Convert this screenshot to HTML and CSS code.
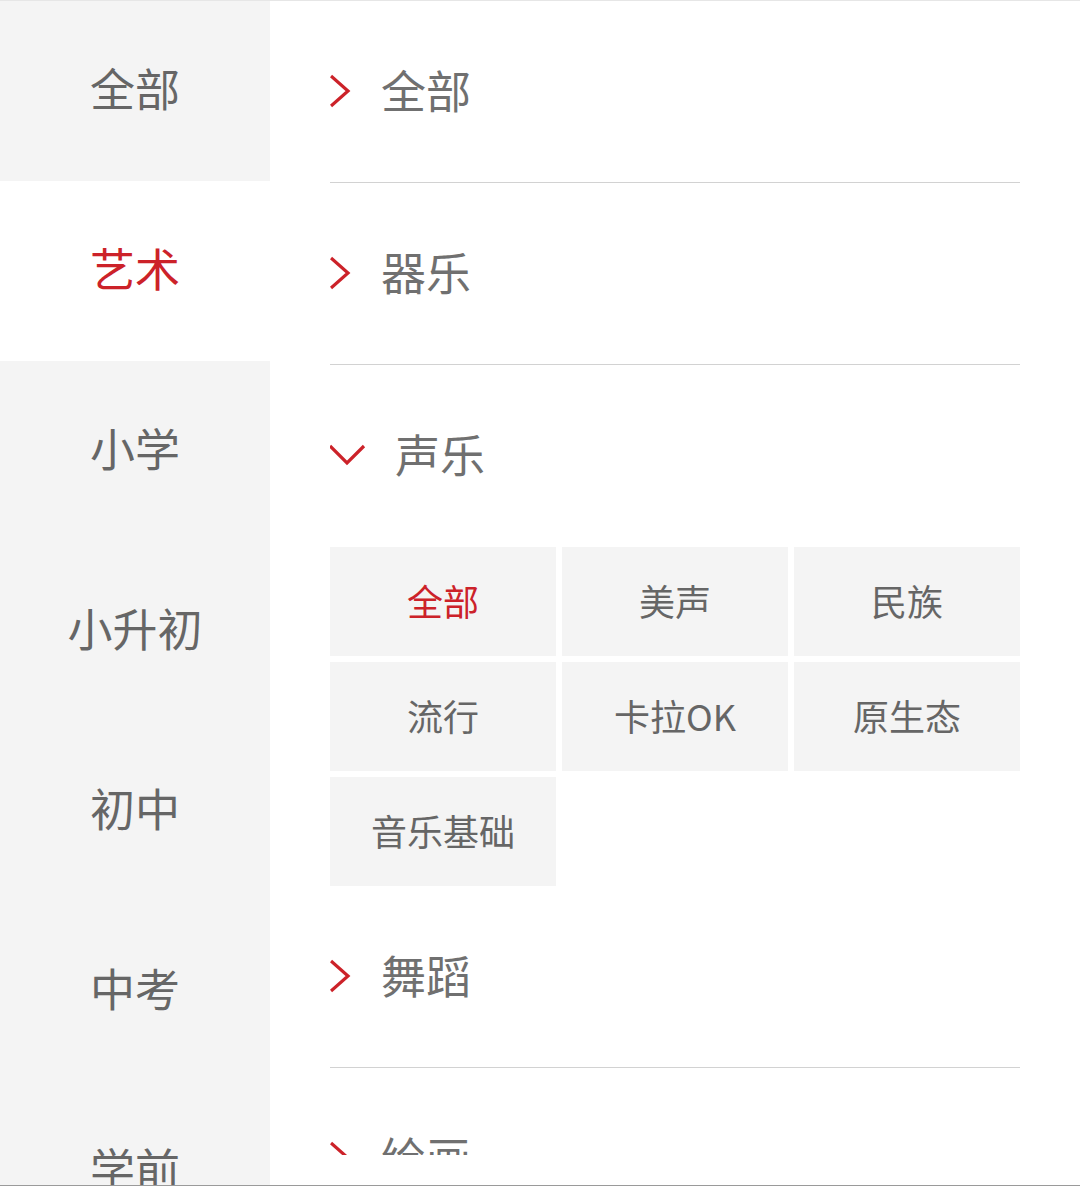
FILE: index.html
```html
<!DOCTYPE html>
<html lang="zh">
<head>
<meta charset="utf-8">
<link rel="stylesheet" href="styles.css">
</head>
<body>
<div class="page">
  <div class="topline"></div>
  <div class="main">
    <nav class="sidebar">
      <div class="side-item">全部</div>
      <div class="side-item active">艺术</div>
      <div class="side-item">小学</div>
      <div class="side-item">小升初</div>
      <div class="side-item">初中</div>
      <div class="side-item">中考</div>
      <div class="side-item">学前</div>
    </nav>
    <section class="content">
      <div class="group">
        <div class="header">
          <svg class="chev-right" width="24" height="34" viewBox="0 0 24 34"><path d="M3 2 L20 17 L3 32" fill="none" stroke="#cc2229" stroke-width="3.2"/></svg>
          <span class="title">全部</span>
        </div>
        <div class="divider"></div>
      </div>
      <div class="group">
        <div class="header">
          <svg class="chev-right" width="24" height="34" viewBox="0 0 24 34"><path d="M3 2 L20 17 L3 32" fill="none" stroke="#cc2229" stroke-width="3.2"/></svg>
          <span class="title">器乐</span>
        </div>
        <div class="divider"></div>
      </div>
      <div class="group open">
        <div class="header">
          <svg class="chev-down" width="38" height="24" viewBox="0 0 38 24"><path d="M2 3 L19 20 L36 3" fill="none" stroke="#cc2229" stroke-width="3.2"/></svg>
          <span class="title">声乐</span>
        </div>
        <div class="grid">
          <div class="cell active">全部</div>
          <div class="cell">美声</div>
          <div class="cell">民族</div>
          <div class="cell">流行</div>
          <div class="cell">卡拉OK</div>
          <div class="cell">原生态</div>
          <div class="cell">音乐基础</div>
        </div>
      </div>
      <div class="group">
        <div class="header">
          <svg class="chev-right" width="24" height="34" viewBox="0 0 24 34"><path d="M3 2 L20 17 L3 32" fill="none" stroke="#cc2229" stroke-width="3.2"/></svg>
          <span class="title">舞蹈</span>
        </div>
        <div class="divider"></div>
      </div>
      <div class="group">
        <div class="header">
          <svg class="chev-right" width="24" height="34" viewBox="0 0 24 34"><path d="M3 2 L20 17 L3 32" fill="none" stroke="#cc2229" stroke-width="3.2"/></svg>
          <span class="title">绘画</span>
        </div>
        <div class="divider"></div>
      </div>
    </section>
  </div>
  <div class="bottomline"></div>
</div>
</body>
</html>
```

FILE: styles.css
```css
html, body {
  margin: 0;
  padding: 0;
  background: #ffffff;
}
body {
  width: 1080px;
  height: 1186px;
  overflow: hidden;
  font-family: "Noto Sans CJK SC", "Noto Sans", sans-serif;
}
.page {
  display: flex;
  flex-direction: column;
  height: 1186px;
}
.topline {
  height: 1px;
  background: #e6e6e6;
  flex: none;
}
.bottomline {
  height: 1px;
  background: #9a9a9a;
  flex: none;
}
.main {
  flex: 1;
  display: flex;
  overflow: hidden;
}
.sidebar {
  width: 270px;
  flex: none;
  background: #f4f4f4;
  display: flex;
  flex-direction: column;
}
.side-item {
  height: 180px;
  box-sizing: border-box;
  padding-bottom: 7px;
  flex: none;
  display: flex;
  align-items: center;
  justify-content: center;
  font-size: 45px;
  color: #666666;
  line-height: 1;
}
.side-item.active {
  background: #ffffff;
  color: #cc2229;
}
.content {
  width: 690px;
  margin-left: 60px;
  height: 1154px;
  overflow: hidden;
  display: flex;
  flex-direction: column;
}
.group {
  flex: none;
}
.header {
  height: 181px;
  display: flex;
  align-items: center;
  gap: 29px;
}
.chev-right {
  margin-left: -2px;
  margin-top: -1px;
  flex: none;
}
.chev-down {
  margin-left: -2px;
  margin-top: -2px;
  flex: none;
}
.title {
  font-size: 45px;
  color: #707070;
  line-height: 1;
  padding-bottom: 4px;
}
.divider {
  height: 1px;
  background: #d2d2d2;
}
.grid {
  display: grid;
  grid-template-columns: repeat(3, 226px);
  grid-auto-rows: 109px;
  gap: 6px;
  margin-top: 1px;
}
.cell {
  background: #f4f4f4;
  box-sizing: border-box;
  padding-bottom: 4px;
  display: flex;
  align-items: center;
  justify-content: center;
  font-size: 36px;
  color: #666666;
  line-height: 1;
}
.cell.active {
  color: #cc2229;
}
```
